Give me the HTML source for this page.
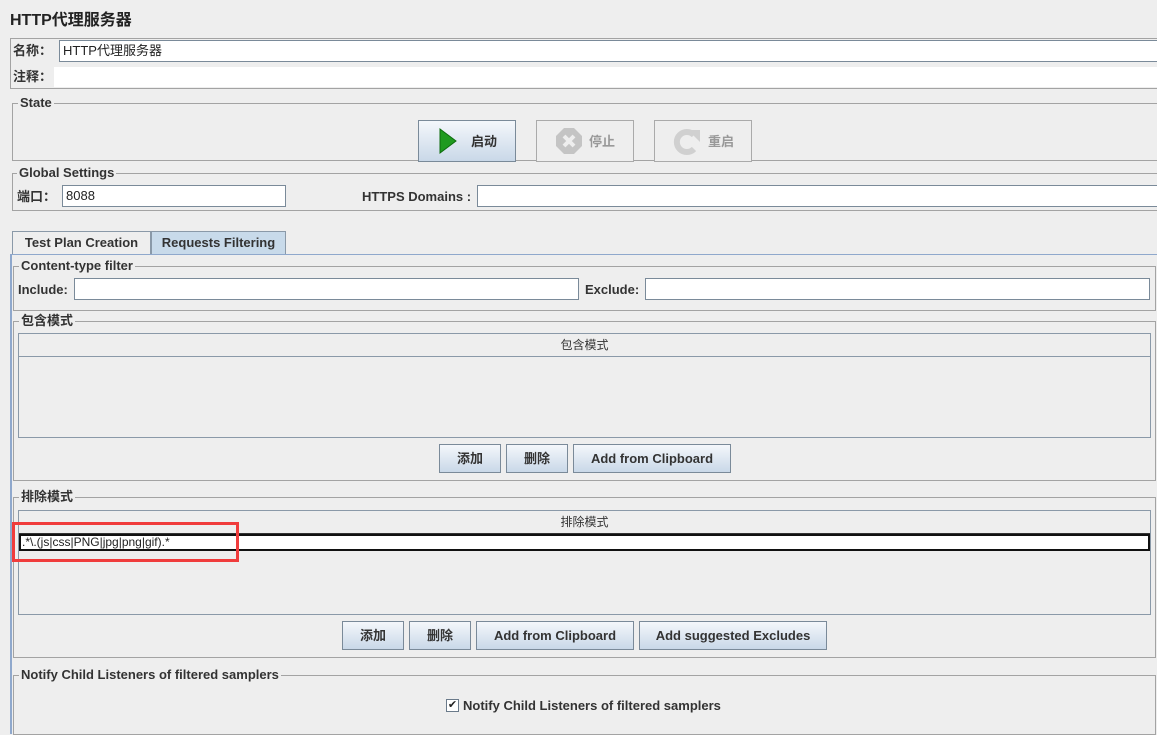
<!DOCTYPE html>
<html><head><meta charset="utf-8"><style>
*{box-sizing:border-box;margin:0;padding:0}
body{width:1157px;height:723px;background:#eeeeee;position:relative;overflow:hidden;font-family:"Liberation Sans","Noto Sans CJK SC",sans-serif;color:#333;font-size:13px;line-height:15px}
.a{position:absolute}
.b{font-weight:bold}
.grp{position:absolute;border:1px solid #a3a3a3}
.gl{position:absolute;background:#eeeeee;padding:0 2px;font-weight:bold;font-size:13px;line-height:14px;color:#333}
.tf{position:absolute;background:#fff;border:1px solid #7a8a99;font-size:13px;line-height:20px;padding-left:3px;color:#222}
.btn{position:absolute;border:1px solid #7a8a99;background:linear-gradient(#f4f7fb,#c9d8e8);font-weight:bold;font-size:13px;display:flex;align-items:center;justify-content:center;color:#333}
.tbl{position:absolute;border:1px solid #8a99a8;background:#eeeeee}
.th{position:absolute;left:0;right:0;top:0;height:23px;border-bottom:1px solid #333;text-align:center;line-height:23px;font-size:12px;background:#eeeeee}
</style></head><body>
<div class="a b" style="left:10px;top:11px;font-size:16px;line-height:20px;color:#222">HTTP代理服务器</div>
<div class="grp" style="left:10px;top:38px;width:1150px;height:51px"></div>
<div class="a b" style="left:13px;top:43px">名称：</div>
<div class="tf" style="left:59px;top:40px;width:1100px;height:22px">HTTP代理服务器</div>
<div class="a b" style="left:13px;top:69px">注释：</div>
<div class="a" style="left:54px;top:67px;width:1105px;height:20px;background:#fff"></div>

<div class="grp" style="left:12px;top:103px;width:1150px;height:58px"></div>
<div class="gl" style="left:18px;top:96px">State</div>
<div class="btn" style="left:418px;top:120px;width:98px;height:42px"><svg width="22" height="28" viewBox="0 0 22 28" style="margin-right:12px"><path d="M3 2 L19 14 L3 26Z" fill="#1f9a1f" stroke="#0d6b0d"/></svg>启动</div>
<div class="btn" style="left:536px;top:120px;width:98px;height:42px;background:#eeeeee;border-color:#aaa;color:#999"><svg width="28" height="28" viewBox="0 0 28 28" style="margin-right:6px"><polygon points="9,1 19,1 27,9 27,19 19,27 9,27 1,19 1,9" fill="#c4c4c4"/><path d="M9 9L19 19M19 9L9 19" stroke="#eee" stroke-width="4"/></svg>停止</div>
<div class="btn" style="left:654px;top:120px;width:98px;height:42px;background:#eeeeee;border-color:#aaa;color:#999"><svg width="30" height="28" viewBox="0 0 30 28" style="margin-right:6px"><path d="M22 8 A10 10 0 1 0 22 22" fill="none" stroke="#d0d0d0" stroke-width="6"/><path d="M16 3 L28 3 L28 15Z" fill="#d0d0d0"/></svg>重启</div>

<div class="grp" style="left:12px;top:173px;width:1150px;height:38px"></div>
<div class="gl" style="left:17px;top:166px">Global Settings</div>
<div class="a b" style="left:17px;top:189px">端口：</div>
<div class="tf" style="left:62px;top:185px;width:224px;height:22px">8088</div>
<div class="a b" style="left:362px;top:189px">HTTPS Domains :</div>
<div class="tf" style="left:477px;top:185px;width:685px;height:22px"></div>

<div class="a b" style="left:12px;top:231px;width:139px;height:24px;border:1px solid #8a99a8;border-bottom:none;background:#eeeeee;text-align:center;line-height:22px">Test Plan Creation</div>
<div class="a b" style="left:151px;top:231px;width:135px;height:24px;border:1px solid #8a99a8;border-bottom:none;background:#c8daea;text-align:center;line-height:22px">Requests Filtering</div>
<div class="a" style="left:10px;top:254px;width:1150px;height:480px;border-top:1px solid #8fa8cc;border-left:2px solid #8fa8cc"></div>

<div class="grp" style="left:13px;top:266px;width:1143px;height:45px"></div>
<div class="gl" style="left:19px;top:259px">Content-type filter</div>
<div class="a b" style="left:18px;top:282px">Include:</div>
<div class="tf" style="left:74px;top:278px;width:505px;height:22px"></div>
<div class="a b" style="left:585px;top:282px">Exclude:</div>
<div class="tf" style="left:645px;top:278px;width:505px;height:22px"></div>

<div class="grp" style="left:13px;top:321px;width:1143px;height:160px"></div>
<div class="gl" style="left:19px;top:314px">包含模式</div>
<div class="tbl" style="left:18px;top:333px;width:1133px;height:105px"><div class="th" style="border-bottom-color:#8a99a8">包含模式</div></div>
<div class="btn" style="left:439px;top:444px;width:62px;height:29px">添加</div>
<div class="btn" style="left:506px;top:444px;width:62px;height:29px">删除</div>
<div class="btn" style="left:573px;top:444px;width:158px;height:29px">Add from Clipboard</div>

<div class="grp" style="left:13px;top:497px;width:1143px;height:161px"></div>
<div class="gl" style="left:19px;top:490px">排除模式</div>
<div class="tbl" style="left:18px;top:510px;width:1133px;height:105px"><div class="th">排除模式</div>
<div class="a" style="left:0;right:0;top:23px;height:17px;border:2px solid #111;background:#fff;font-size:12px;line-height:13px;padding-left:1px;color:#222">.*\.(js|css|PNG|jpg|png|gif).*</div></div>
<div class="a" style="left:12px;top:522px;width:227px;height:40px;border:3px solid #f03c3c"></div>
<div class="btn" style="left:342px;top:621px;width:62px;height:29px">添加</div>
<div class="btn" style="left:409px;top:621px;width:62px;height:29px">删除</div>
<div class="btn" style="left:476px;top:621px;width:158px;height:29px">Add from Clipboard</div>
<div class="btn" style="left:639px;top:621px;width:188px;height:29px">Add suggested Excludes</div>

<div class="grp" style="left:13px;top:675px;width:1143px;height:60px"></div>
<div class="gl" style="left:19px;top:668px">Notify Child Listeners of filtered samplers</div>
<div class="a" style="left:446px;top:699px;width:13px;height:13px;border:1px solid #6a7a8a;background:#fff;font-size:11px;line-height:11px;text-align:center;color:#222">✔</div>
<div class="a b" style="left:463px;top:698px">Notify Child Listeners of filtered samplers</div>
</body></html>
